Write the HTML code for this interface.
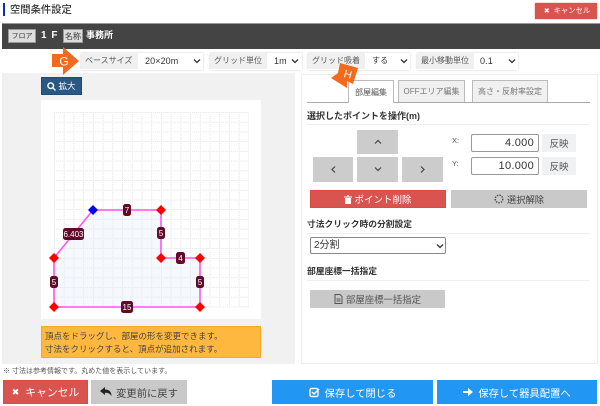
<!DOCTYPE html>
<html lang="ja"><head><meta charset="utf-8"><title>空間条件設定</title>
<style>
html,body{margin:0;padding:0;background:#fff}
body{width:600px;height:406px;overflow:hidden;position:relative;font-family:"Liberation Sans","Noto Sans CJK JP",sans-serif;font-size:10px;color:#333}
.a{position:absolute;box-sizing:border-box;white-space:nowrap}
.c{display:flex;align-items:center;justify-content:center}
.lab{background:#f0f0f0;color:#555;padding-left:4px;line-height:16px;height:16px;top:53px;font-size:8px}
.sel{top:53px;height:16px;line-height:16px;font-size:9px;color:#333;letter-spacing:.1px}
.box{top:52.5px;height:17px;background:#fff;box-shadow:0 0 2px #ccc}
.tab{top:80px;height:22px;background:#f0f0f0;border:1px solid #bbb;border-bottom:0;color:#777;font-size:8px}
.arrow{background:#ccc;width:41px;height:24px}
.h{left:307px;font-size:8.75px;font-weight:bold;color:#333;width:283px;border-bottom:1px solid #eee}
</style></head><body>
<div class="a" style="left:3px;top:3px;width:2px;height:13px;background:#0a2fb0"></div>
<div class="a" style="left:10px;top:2px;font-size:10.3px;font-weight:500;color:#333;line-height:17px">空間条件設定</div>
<div class="a c" style="left:535px;top:3px;width:62px;height:16px;background:#d9534f;color:#fff;font-size:7.3px;box-shadow:0 0 1px #d9534f;padding-left:2px"><span style="font-size:7px;margin-right:4px">✖</span>キャンセル</div>
<div class="a" style="left:2px;top:23px;width:598px;height:26px;background:#444;border-top:1px solid #999"></div>
<div class="a c" style="left:8px;top:29px;width:28px;height:14px;background:#ddd;border:1px solid #999;font-size:7px;color:#333">フロア</div>
<div class="a" style="left:41px;top:28px;color:#fff;font-weight:bold;font-size:10px;line-height:16px;letter-spacing:1px">1 F</div>
<div class="a c" style="left:63px;top:29px;width:20px;height:14px;background:#ddd;border:1px solid #999;font-size:8px;color:#333">名称</div>
<div class="a" style="left:86px;top:27px;color:#fff;font-weight:bold;font-size:9px;line-height:16px">事務所</div>

<div class="a box" style="left:81px;width:122px"></div>
<div class="a lab" style="left:81px;width:57px">ベースサイズ</div>
<div class="a sel" style="left:145px">20×20m</div>
<div class="a box" style="left:210px;width:92px"></div>
<div class="a lab" style="left:210px;width:57px">グリッド単位</div>
<div class="a sel" style="left:274px">1m</div>
<div class="a box" style="left:308px;width:102px"></div>
<div class="a lab" style="left:308px;width:57px">グリッド吸着</div>
<div class="a sel" style="left:372px;font-size:8px">する</div>
<div class="a box" style="left:417px;width:101px"></div>
<div class="a lab" style="left:417px;width:57px">最小移動単位</div>
<div class="a sel" style="left:480px">0.1</div>
<svg class="a" style="left:0;top:0;pointer-events:none" width="600" height="100" fill="none" stroke="#333" stroke-width="1.3"><path d="M194 59.5l3 3 3-3M292 59.5l3 3 3-3M401 59.5l3 3 3-3M509 59.5l3 3 3-3"/></svg>

<div class="a" style="left:2px;top:73px;width:293px;height:291px;background:#f1f1f1"></div>
<div class="a" style="left:41px;top:100px;width:220px;height:219px;background:#fff"></div>
<div class="a c" style="left:41px;top:77px;width:41px;height:18px;background:#2b5783;color:#fff;font-size:8.5px;border:1px solid #1f4a75"><svg width="9" height="9" viewBox="0 0 9 9" fill="none" stroke="#fff" stroke-width="1.4" style="margin-right:2px"><circle cx="3.7" cy="3.7" r="2.8"/><path d="M6 6l2.5 2.5"/></svg>拡大</div>

<svg class="a" style="left:0;top:0" width="600" height="406">
<defs><pattern id="g" x="54" y="112" width="9.72" height="9.72" patternUnits="userSpaceOnUse"><path d="M.5 0V9.72M0 .5H9.72" stroke="#e2e2e2" stroke-width="1" stroke-dasharray="1 1" fill="none"/></pattern></defs>
<rect x="54" y="112" width="195" height="195.5" fill="url(#g)"/>
<polygon points="93,210 161,210 161,258 200,258 200,307 54,307 54,258" fill="#e6f0fb" fill-opacity=".4"/>
<polygon points="93,210 161,210 161,258 200,258 200,307 54,307 54,258" fill="none" stroke="#ff55ee" stroke-width="1.6"/>
<g fill="#f00"><path d="M161 205l5 5-5 5-5-5zM161 253l5 5-5 5-5-5zM200 253l5 5-5 5-5-5zM200 302l5 5-5 5-5-5zM54 302l5 5-5 5-5-5zM54 253l5 5-5 5-5-5z"/></g>
<path d="M93 205l5 5-5 5-5-5z" fill="#00f"/>
<g fill="#5f0a28">
<rect x="123" y="204" width="8" height="12" rx="2.5"/>
<rect x="157" y="227" width="8" height="12" rx="2.5"/>
<rect x="176" y="252" width="9" height="12" rx="2.5"/>
<rect x="196" y="276" width="8" height="12" rx="2.5"/>
<rect x="50" y="276" width="8" height="12" rx="2.5"/>
<rect x="121" y="301" width="12" height="12" rx="2.5"/>
<rect x="63" y="228" width="21" height="12" rx="2.5"/>
</g>
<g fill="#fff" font-size="8" text-anchor="middle" font-family="Liberation Sans,sans-serif">
<text x="127" y="213">7</text><text x="161" y="236">5</text><text x="180.5" y="261">4</text><text x="200" y="285">5</text><text x="54" y="285">5</text><text x="127" y="310">15</text><text x="73.5" y="237">6.403</text>
</g>
<polygon points="52,54 63,54 63,47 79,61 63,75 63,67 52,67" fill="#f26a1b"/>
<text x="64" y="65.5" font-size="12" fill="#fff" text-anchor="middle" font-family="Liberation Sans,sans-serif">G</text>
</svg>
<div class="a" style="left:41px;top:326px;width:220px;height:32px;background:#ffb83f;border:1px solid #f5a92a;color:#444;font-size:8.5px;line-height:12.5px;padding:3px 3px 0">頂点をドラッグし、部屋の形を変更できます。<br>寸法をクリックすると、頂点が追加されます。</div>

<div class="a" style="left:301px;top:74px;width:297px;height:290px;background:#fff;border:1px solid #eee"></div>
<div class="a" style="left:307px;top:102px;width:283px;height:1px;background:#aaa"></div>
<div class="a tab c" style="left:348px;width:46px;background:#fff;color:#555;height:23px">部屋編集</div>
<div class="a tab c" style="left:398px;width:67px">OFFエリア編集</div>
<div class="a tab c" style="left:472px;width:76px">高さ・反射率設定</div>
<svg class="a" style="left:0;top:0" width="600" height="100"><polygon points="340,63 358,68 353,84 347,81 347,88 331,78 338,73" fill="#f26a1b"/><text x="348" y="78" font-size="11" fill="#fff" text-anchor="middle" transform="rotate(15 348 74)" font-family="Liberation Sans,sans-serif">H</text></svg>

<div class="a h" style="top:108px;height:17px;line-height:17px;font-size:9px">選択したポイントを操作(m)</div>
<div class="a arrow" style="left:357px;top:130px"></div>
<div class="a arrow" style="left:313px;top:157px;width:40px;height:25px"></div>
<div class="a arrow" style="left:357px;top:157px;height:25px"></div>
<div class="a arrow" style="left:402px;top:157px;height:25px"></div>
<svg class="a" style="left:0;top:0" width="600" height="200" fill="none" stroke="#444" stroke-width="1.2"><path d="M375 143.5l3-3 3 3M335 166.5l-3 3 3 3M375 167.5l3 3 3-3M421 166.5l3 3-3 3"/></svg>
<div class="a" style="left:452px;top:136px;font-size:7.5px;color:#555;line-height:10px">X:</div>
<div class="a" style="left:452px;top:159px;font-size:7.5px;color:#555;line-height:10px">Y:</div>
<div class="a" style="left:471px;top:134px;width:68px;height:18px;border:1px solid #999;border-radius:2px;text-align:right;padding-right:4px;font-size:11px;line-height:16px;letter-spacing:.3px">4.000</div>
<div class="a" style="left:471px;top:157px;width:68px;height:18px;border:1px solid #999;border-radius:2px;text-align:right;padding-right:4px;font-size:11px;line-height:16px;letter-spacing:.3px">10.000</div>
<div class="a c" style="left:542px;top:134px;width:34px;height:18px;background:#eff1f3;color:#555;font-size:9.5px">反映</div>
<div class="a c" style="left:542px;top:157px;width:34px;height:18px;background:#eff1f3;color:#555;font-size:9.5px">反映</div>
<div class="a c" style="left:310px;top:190px;width:136px;height:18px;background:#d9534f;color:#fff;font-size:9.5px;border:1px solid #e04a45"><svg width="8" height="9" viewBox="0 0 8 9" fill="#fff" style="margin-right:2px"><path d="M0 1.5h8v1H0zM3 .2h2v1H3zM1 3h6v6H1z"/></svg>ポイント削除</div>
<div class="a c" style="left:451px;top:190px;width:136px;height:18px;background:#c9c9c9;color:#444;font-size:9.3px"><svg width="10" height="10" viewBox="0 0 10 10" fill="none" stroke="#444" stroke-width="1.4" stroke-dasharray="1.4 1.2" style="margin-right:3px"><circle cx="5" cy="5" r="3.8"/></svg>選択解除</div>

<div class="a h" style="top:217px;height:17px;line-height:15px">寸法クリック時の分割設定</div>
<div class="a" style="left:310px;top:237px;width:136px;height:17px;border:1px solid #888;border-radius:2px;font-size:10px;line-height:15px;padding-left:3px">2分割</div>
<svg class="a" style="left:0;top:0" width="600" height="406" fill="none" stroke="#333" stroke-width="1.3"><path d="M437 244.5l3 3 3-3"/></svg>
<div class="a h" style="top:264px;height:17px;line-height:15px">部屋座標一括指定</div>
<div class="a c" style="left:310px;top:290px;width:135px;height:18px;background:#c9c9c9;color:#555;font-size:9.4px"><svg width="9" height="10" viewBox="0 0 9 10" fill="none" stroke="#555" style="margin-right:3px"><path d="M1 .5h5l2 2v7H1zM2.5 5h4M2.5 7h4"/></svg>部屋座標一括指定</div>

<div class="a" style="left:3px;top:366px;font-size:7px;color:#555;line-height:12px">※ 寸法は参考情報です。丸めた値を表示しています。</div>
<div class="a c" style="left:3px;top:380px;width:85px;height:24px;background:#d9534f;color:#fff;font-size:10.8px;border:1px solid #e04a45"><span style="font-size:9px;margin-right:6px">✖</span>キャンセル</div>
<div class="a c" style="left:91px;top:380px;width:96px;height:24px;background:#c9c9c9;color:#444;font-size:10.3px"><svg width="12" height="10" viewBox="0 0 12 10" fill="#222" style="margin-right:4px"><path d="M0 4L5 0v2.5c4 0 6.5 2 6.5 6.5C10 6.5 8 5.7 5 5.7V8z"/></svg>変更前に戻す</div>
<div class="a c" style="left:272px;top:380px;width:161px;height:24px;background:#2196f3;color:#fff;font-size:10.3px"><svg width="11" height="11" viewBox="0 0 11 11" fill="none" stroke="#fff" stroke-width="1.4" style="margin-right:5px"><rect x="1" y="1.5" width="8" height="8" rx="1.5"/><path d="M3 5l2 2 5-5"/></svg>保存して閉じる</div>
<div class="a c" style="left:437px;top:380px;width:160px;height:24px;background:#2196f3;color:#fff;font-size:10.3px"><svg width="10" height="10" viewBox="0 0 10 10" fill="#fff" style="margin-right:5px"><path d="M0 4h5V1l5 4-5 4V6H0z"/></svg>保存して器具配置へ</div>
</body></html>
